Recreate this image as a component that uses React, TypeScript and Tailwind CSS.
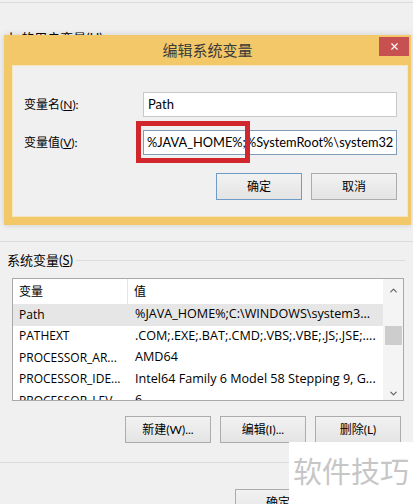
import { X, ChevronUp, ChevronDown } from "lucide-react";

const font = "font-['Lato','Noto_Sans_CJK_SC',sans-serif]";
const listFont = "font-['Open_Sans','Noto_Sans_CJK_SC',sans-serif]";

function WinButton({ label, primary = false, className = "" }: { label: string; primary?: boolean; className?: string }) {
  return (
    <div
      className={`flex items-center justify-center h-[27px] w-[86px] text-[12px] text-black bg-gradient-to-b from-[#f2f2f2] to-[#e4e4e4] border ${
        primary ? "border-[#6f9cc4]" : "border-[#acacac]"
      } ${className}`}
    >
      {label}
    </div>
  );
}

const rows = [
  { name: "Path", value: "%JAVA_HOME%;C:\\WINDOWS\\system3...", selected: true },
  { name: "PATHEXT", value: ".COM;.EXE;.BAT;.CMD;.VBS;.VBE;.JS;.JSE;...." },
  { name: "PROCESSOR_AR...", value: "AMD64" },
  { name: "PROCESSOR_IDE...", value: "Intel64 Family 6 Model 58 Stepping 9, G..." },
  { name: "PROCESSOR_LEV...", value: "6" },
];

export default function App() {
  return (
    <div className={`relative w-[413px] h-[504px] overflow-hidden bg-[#f0f0f0] ${font}`}>
      {/* window behind the dialog */}
      <div className="h-[3px] border-b border-[#dadada]" />
      <div className="pl-[5px] pt-[27px] text-[13px] leading-[16px] text-black">上 的用户变量(U)</div>

      <div className="mt-[195px] border-t border-[#dcdcdc]" />
      <div className="flex items-center pl-[7px] mt-[10px] h-[16px]">
        <span className="text-[13px] leading-[16px] text-black">
          系统变量(<span className="underline">S</span>)
        </span>
        <div className="flex-1 ml-[3px] mr-[8px] border-t border-[#dcdcdc]" />
      </div>

      {/* list box */}
      <div className={`ml-[12px] mt-[10px] w-[392px] h-[123px] border border-[#a9a9a9] bg-white flex overflow-hidden ${listFont}`}>
        <div className="flex-1 flex flex-col min-w-0">
          <div className="flex h-[25px] shrink-0 items-center text-[12px] text-black">
            <div className="w-[115px] pl-[6px] h-full flex items-center border-r border-[#e5e5e5]">变量</div>
            <div className="pl-[6px]">值</div>
          </div>
          {rows.map((r) => (
            <div
              key={r.name}
              className={`flex h-[21.5px] shrink-0 items-center text-[12px] text-black whitespace-nowrap ${
                r.selected ? "bg-[#e6e6e6]" : ""
              }`}
            >
              <div className="w-[122px] shrink-0 pl-[6px]">{r.name}</div>
              <div className="text-[12.6px]">{r.value}</div>
            </div>
          ))}
        </div>
        <div className="w-[20px] shrink-0 bg-[#f4f4f4] flex flex-col items-center">
          <ChevronUp size={11} strokeWidth={2.5} className="mt-[6px] text-[#606060]" />
          <div className="mt-[30px] w-[17px] h-[19px] bg-[#cdcdcd]" />
          <div className="flex-1" />
          <ChevronDown size={11} strokeWidth={2.5} className="mb-[1px] text-[#606060]" />
        </div>
      </div>

      <div className="flex justify-end gap-[9px] pr-[12px] mt-[15px]">
        <WinButton label="新建(W)..." className="w-[85px]" />
        <WinButton label="编辑(I)..." className="w-[85px]" />
        <WinButton label="删除(L)" className="w-[85px]" />
      </div>

      <div className="mt-[19px] border-t border-[#dcdcdc]" />
      <div className="pl-[235px] mt-[26px]">
        <WinButton label="确定" />
      </div>

      {/* edit dialog */}
      <div className="absolute left-[4px] top-[35px] w-[407px] h-[190px] bg-[#f2c869] flex flex-col shadow-[0_0_6px_rgba(0,0,0,0.15)]">
        <div className="h-[30px] shrink-0 flex items-center justify-center text-[15px] text-[#3a3a3a]">编辑系统变量</div>
        <div className="absolute right-[2px] top-[2px] w-[30px] h-[19px] bg-[#c75050] flex items-center justify-center">
          <X size={11} strokeWidth={2.5} className="text-white" />
        </div>
        <div className="ml-[8px] mr-[3px] h-[152px] bg-[#f0f0f0] border border-[#f5e6bd] pl-[11px] pr-[10px] pt-[26px] text-[12px] text-black">
          <div className="flex items-center">
            <div className="w-[119px]">
              变量名(<span className="underline">N</span>):
            </div>
            <div className="w-[254px] h-[25px] bg-white border border-[#c9c9c9] flex items-center pl-[4px] text-[13px]">Path</div>
          </div>
          <div className="flex items-center mt-[13px]">
            <div className="w-[119px]">
              变量值(<span className="underline">V</span>):
            </div>
            <div className="w-[254px] h-[25px] bg-white border border-[#7f9db9] flex items-center pl-[3px] text-[12.8px] overflow-hidden whitespace-nowrap">
              %JAVA_HOME%;%SystemRoot%\system32
            </div>
          </div>
          <div className="flex justify-end gap-[9px] mt-[18px]">
            <WinButton label="确定" primary />
            <WinButton label="取消" />
          </div>
        </div>
        <div className="absolute left-[132px] top-[86px] w-[114px] h-[42px] border-[5px] border-[#d1262b]" />
      </div>

      {/* watermark */}
      <div className="absolute left-[289px] top-[442px] w-[124px] h-[62px] bg-white flex items-start pt-[10px] pl-[4px]">
        <span className="text-[29px] leading-[36px] text-[#c6c6c6] font-['Noto_Sans_CJK_SC',sans-serif]">软件技巧</span>
      </div>
    </div>
  );
}
